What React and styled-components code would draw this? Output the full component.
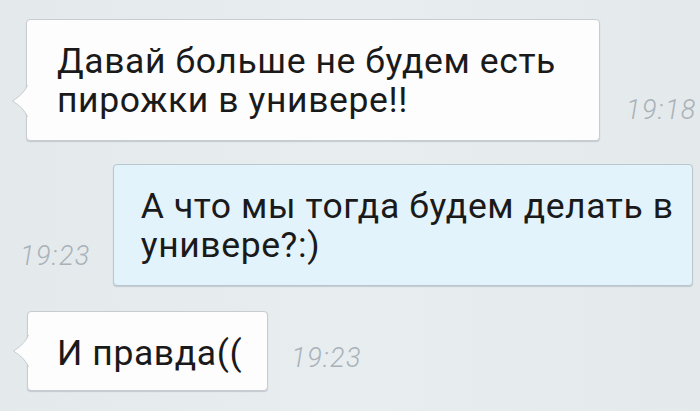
import React from "react";
import styled, { createGlobalStyle } from "styled-components";

const Global = createGlobalStyle`
  html, body { margin: 0; padding: 0; }
  body {
    background: #e6ebee;
    font-family: Roboto, "Noto Sans", sans-serif;
    overflow: hidden;
  }
`;

const Chat = styled.div`
  width: 700px;
  height: 411px;
  box-sizing: border-box;
  padding-top: 19px;
  display: flex;
  flex-direction: column;
  gap: 23px;
  background: linear-gradient(90deg, #e4e9ec 0%, #e8edf0 50%, #e4e9ec 100%);
  overflow: hidden;
`;

const Row = styled.div`
  display: flex;
  align-items: flex-end;
  padding-left: ${(p) => p.$indent}px;
  margin-top: ${(p) => p.$shift || 0}px;
`;

const Bubble = styled.div`
  position: relative;
  box-sizing: border-box;
  width: ${(p) => (p.$width ? `${p.$width}px` : "auto")};
  padding: 22px ${(p) => p.$padRight}px ${(p) => p.$padBottom}px ${(p) => p.$padLeft}px;
  background: ${(p) => (p.$out ? "#e3f3fb" : "#fdfdfd")};
  border: 1px solid ${(p) => (p.$out ? "#b8c7cf" : "#c6ccd0")};
  border-radius: 4px;
  box-shadow: 0 1px 1px rgba(90, 105, 115, 0.25);
  font-family: Roboto, "Noto Sans", sans-serif;
  font-size: 35.5px;
  line-height: 39px;
  letter-spacing: 0.6px;
  color: #1a1a1a;
`;

const Tail = styled.svg`
  position: absolute;
  left: -16px;
  bottom: 23px;
  width: 17px;
  height: 32px;
  overflow: visible;
`;

const Time = styled.span`
  font-family: Roboto, "Noto Sans", sans-serif;
  font-style: italic;
  font-weight: 300;
  font-size: 27px;
  line-height: 27px;
  letter-spacing: 1.4px;
  color: #a9b2b9;
  margin: 0 ${(p) => p.$right || 0}px ${(p) => p.$bottom}px ${(p) => p.$left || 0}px;
  white-space: nowrap;
`;

const IncomingTail = () => (
  <Tail viewBox="0 0 17 32">
    <path d="M17 0 Q13 9 1.5 16 Q13 23 17 32 Z" fill="#fdfdfd" />
    <path d="M16.5 0 Q13 9 1.5 16 Q13 23 16.5 32" fill="none" stroke="#c6ccd0" strokeWidth="1" />
  </Tail>
);

export default function App() {
  return (
    <>
      <Global />
      <Chat>
        <Row $indent={26}>
          <Bubble $width={574} $padLeft={30} $padRight={20} $padBottom={20}>
            <IncomingTail />
            Давай больше не будем есть пирожки в универе!!
          </Bubble>
          <Time $left={26} $bottom={17}>19:18</Time>
        </Row>
        <Row $indent={20}>
          <Time $right={22} $bottom={16}>19:23</Time>
          <Bubble $out $width={580} $padLeft={27} $padRight={18} $padBottom={20}>
            А что мы тогда будем делать в универе?:)
          </Bubble>
        </Row>
        <Row $indent={27} $shift={2}>
          <Bubble $padLeft={29} $padRight={25} $padBottom={17}>
            <IncomingTail />
            И правда((
          </Bubble>
          <Time $left={23} $bottom={19}>19:23</Time>
        </Row>
      </Chat>
    </>
  );
}
